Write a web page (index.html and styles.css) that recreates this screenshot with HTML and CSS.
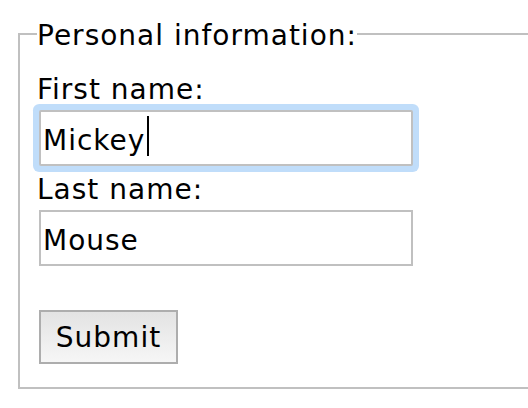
FILE: index.html
```html
<!DOCTYPE html>
<html lang="en">
<head>
<meta charset="utf-8">
<title>Personal information</title>
<link rel="stylesheet" href="styles.css">
</head>
<body>
<form class="form">
  <fieldset class="group">
    <legend class="group-title">Personal information:</legend>
    <label class="label" for="first">First name:</label>
    <div class="field">
      <input class="input input-focused" id="first" type="text" value="Mickey">
      <span class="caret"></span>
    </div>
    <label class="label" for="last">Last name:</label>
    <div class="field">
      <input class="input" id="last" type="text" value="Mouse">
    </div>
    <button class="submit" type="button">Submit</button>
  </fieldset>
</form>
</body>
</html>
```

FILE: styles.css
```css
html, body {
  margin: 0;
  padding: 0;
  background: #ffffff;
}

body {
  width: 528px;
  height: 408px;
  overflow: hidden;
  font-family: "DejaVu Sans", Verdana, sans-serif;
  font-size: 28px;
  letter-spacing: 1px;
  color: #000000;
}

.form {
  margin: 0;
}

.group {
  margin: 17px 0 0 18px;
  width: 512px;
  box-sizing: border-box;
  border: 2px solid #c0c0c0;
  padding: 24px 17px 23px 17px;
  min-width: 0;
}

.group-title {
  padding: 4px 0 0 0;
  line-height: 30px;
}

.label {
  display: block;
  line-height: 30px;
}

.field {
  position: relative;
  width: fit-content;
  margin: 5px 0 9px 2px;
}

.input {
  display: block;
  box-sizing: border-box;
  width: 374px;
  height: 56px;
  margin: 0;
  padding: 4px 2px 0 2px;
  border: 2px solid #c0c0c0;
  border-radius: 0;
  background: #ffffff;
  font-family: inherit;
  font-size: 28px;
  letter-spacing: 1px;
  color: #000000;
  outline: none;
}

.input-focused {
  border-radius: 2px;
  box-shadow: 0 0 0 6px #c0ddfa;
}

.caret {
  position: absolute;
  left: 108px;
  top: 6px;
  width: 2px;
  height: 40px;
  background: #000000;
}

.submit {
  display: block;
  box-sizing: border-box;
  width: 139px;
  height: 54px;
  margin: 44px 0 0 2px;
  padding: 0 12px;
  border: 2px solid #adadad;
  border-radius: 0;
  background: linear-gradient(to bottom, #e3e3e3, #f6f6f6);
  font-family: inherit;
  font-size: 28px;
  letter-spacing: 1px;
  color: #000000;
  text-align: center;
}
```
